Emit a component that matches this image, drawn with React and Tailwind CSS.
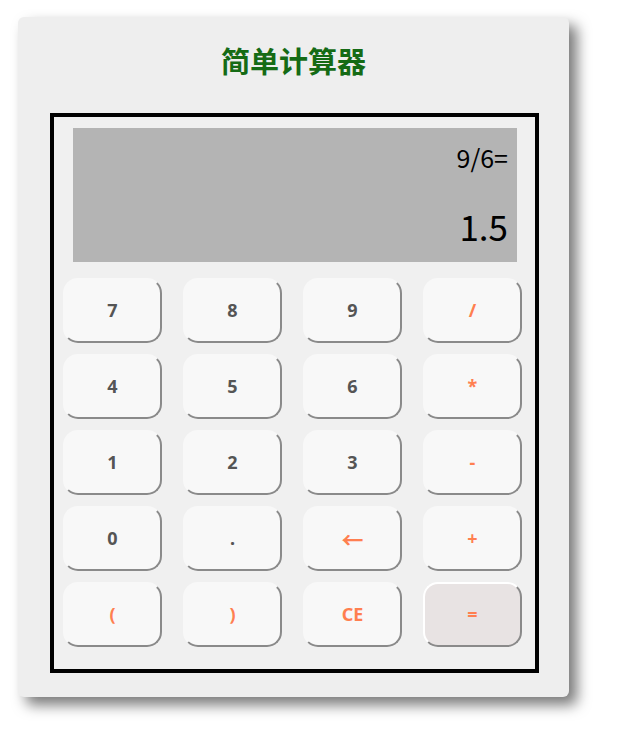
import React, { useState } from "react";

const keys = [
  { label: "7" },
  { label: "8" },
  { label: "9" },
  { label: "/", op: true },
  { label: "4" },
  { label: "5" },
  { label: "6" },
  { label: "*", op: true },
  { label: "1" },
  { label: "2" },
  { label: "3" },
  { label: "-", op: true },
  { label: "0" },
  { label: "." },
  { label: "←", op: true, cjk: true },
  { label: "+", op: true },
  { label: "(", op: true },
  { label: ")", op: true },
  { label: "CE", op: true },
  { label: "=", op: true, eq: true },
];

export default function App() {
  const [expr] = useState("9/6=");
  const [result] = useState("1.5");

  return (
    <div
      className="min-h-screen bg-white pl-[18px] pt-[17px]"
      style={{ fontFamily: '"Noto Sans CJK SC", "Noto Sans", sans-serif' }}
    >
      {/* Card */}
      <div className="w-[551px] h-[680px] bg-[#eeeeee] rounded-md shadow-[8px_8px_14px_#7a7a7a] pt-[25px] pl-[32px]">
        <h2 className="text-center text-[29px] leading-[36px] font-bold text-[#156b15] pr-[32px]">
          简单计算器
        </h2>

        {/* Calculator body */}
        <div className="mt-[35px] w-[489px] h-[560px] border-4 border-black bg-[#f0f0f0] pt-[11px]">
          {/* Display */}
          <div className="ml-[19px] w-[444px] h-[134px] bg-[#b4b4b4] flex flex-col items-end pr-[9px] text-black">
            <div className="mt-[11px] text-[25px] leading-[36px]">{expr}</div>
            <div className="mt-[28px] text-[35px] leading-[46px]">{result}</div>
          </div>

          {/* Keys */}
          <div className="mt-[16px] ml-[9px] grid grid-cols-[99px_99px_99px_99px] gap-x-[21px] gap-y-[11px]">
            {keys.map((k) => (
              <button
                key={k.label}
                className={`h-[65px] rounded-[15px] border-2 border-t-[#f8f8f8] border-l-[#f8f8f8] border-r-[#8a8a8a] border-b-[#8a8a8a] flex items-center justify-center text-[18px] font-bold ${
                  k.cjk ? "font-['Noto_Sans_CJK_SC',sans-serif] text-[22px]" : "font-['Noto_Sans',sans-serif]"
                } ${k.eq ? "bg-[#e8e3e3] border-t-white border-l-white" : "bg-[#f8f8f8]"} ${
                  k.op ? "text-[#ff7f50]" : "text-[#555555]"
                }`}
              >
                {k.label}
              </button>
            ))}
          </div>
        </div>
      </div>
    </div>
  );
}
